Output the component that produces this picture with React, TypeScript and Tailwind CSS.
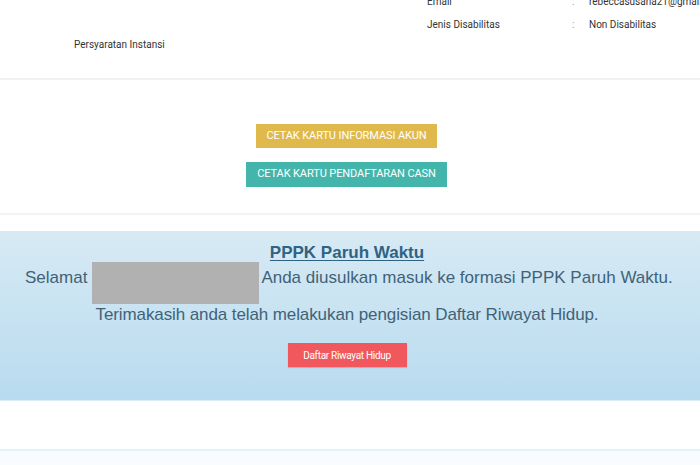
export default function App() {
  return (
    <div className="w-[700px] h-[465px] overflow-hidden bg-white font-['Liberation_Sans',Arial,sans-serif]">
      {/* biodata top */}
      <div className="relative h-[80px] border-b-2 border-[#f1f1f1]">
        <div className="flex">
          <div className="w-[427px] shrink-0 pl-[74px] pt-[37px] text-[10px] text-[#333] font-['Roboto',sans-serif]">
            Persyaratan Instansi
          </div>
          <div className="-mt-[10px] text-[10px] text-[#333] font-['Roboto',sans-serif] whitespace-nowrap">
            <div className="flex h-[23px] items-center">
              <span className="w-[145px]">Email</span>
              <span className="w-[17px] text-[#999]">:</span>
              <span>rebeccasusana21@gmail.com</span>
            </div>
            <div className="flex h-[23px] items-center">
              <span className="w-[145px]">Jenis Disabilitas</span>
              <span className="w-[17px] text-[#999]">:</span>
              <span>Non Disabilitas</span>
            </div>
          </div>
        </div>
      </div>

      {/* print buttons */}
      <div className="flex flex-col items-center gap-[14px] pt-[44px] pr-[7px] h-[135px] border-b-2 border-[#f3f3f3] font-['Roboto',sans-serif]">
        <button className="h-[24px] w-[181px] bg-[#e0b94c] text-white text-[11px] tracking-[-0.1px]">
          CETAK KARTU INFORMASI AKUN
        </button>
        <button className="h-[25px] w-[201px] bg-[#44b5ab] text-white text-[11px] tracking-[-0.1px]">
          CETAK KARTU PENDAFTARAN CASN
        </button>
      </div>

      {/* notice panel */}
      <div className="mt-[16px] h-[170px] pr-[6px] bg-gradient-to-b from-[#d7eaf4] to-[#b8dbef] border-b border-[#d9edf7] text-center">
        <div className="pt-[13px] leading-[18px] text-[17px] font-bold text-[#2f6384] underline underline-offset-2">
          PPPK Paruh Waktu
        </div>
        <div className="flex items-start pl-[25px] text-[17px] leading-[20px] text-[#3f6279]">
          <span className="mt-[6px]">Selamat</span>
          <span className="ml-[5px] mr-[2px] h-[42px] w-[167px] bg-[#b1b1b1]" />
          <span className="mt-[6px]">Anda diusulkan masuk ke formasi PPPK Paruh Waktu.</span>
        </div>
        <div className="mt-[1px] text-[17px] leading-[20px] tracking-[-0.1px] text-[#3f6279]">
          Terimakasih anda telah melakukan pengisian Daftar Riwayat Hidup.
        </div>
        <div className="mt-[18px] flex justify-center font-['Roboto',sans-serif]">
          <button className="h-[24px] w-[119px] bg-[#f0585e] text-white text-[10px] tracking-[-0.3px] shadow-[0_1px_1px_rgba(0,0,0,0.15)]">
            Daftar Riwayat Hidup
          </button>
        </div>
      </div>

      <div className="h-[48px]" />
      <div className="h-[20px] border-t-2 border-[#e3f1f8] bg-[#f9fcfe]" />
    </div>
  );
}
